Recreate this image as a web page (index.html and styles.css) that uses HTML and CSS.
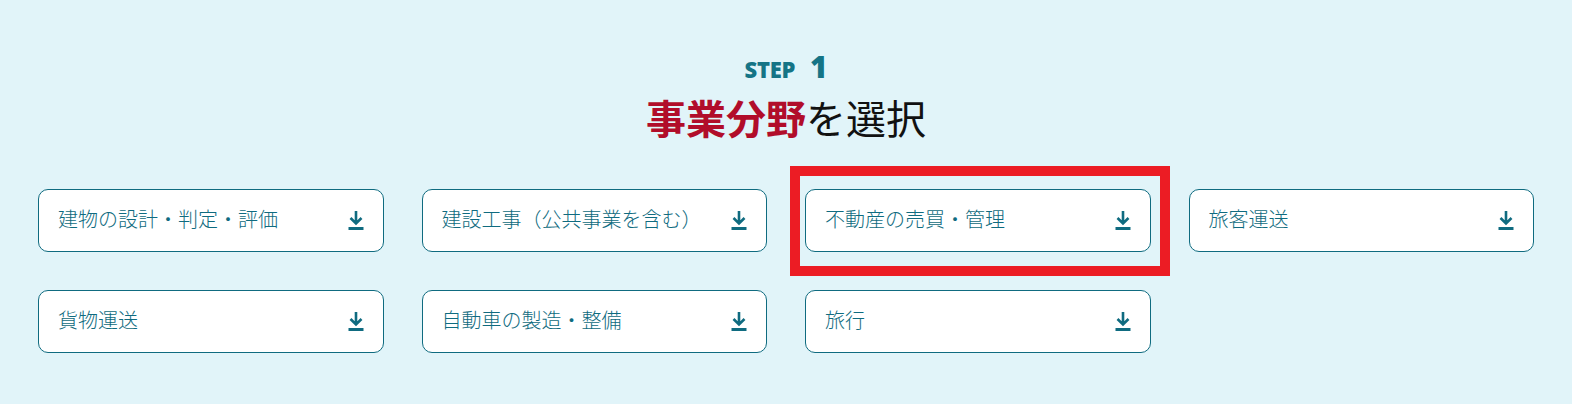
FILE: index.html
```html
<!DOCTYPE html>
<html lang="ja">
<head>
<meta charset="utf-8">
<link rel="stylesheet" href="styles.css">
</head>
<body>
<section class="step">
  <div class="step-head">
    <p class="step-label">STEP<span class="step-num">1</span></p>
    <h2 class="step-title"><strong>事業分野</strong>を選択</h2>
  </div>
  <ul class="cards">
    <li class="card"><span class="card-text">建物の設計・判定・評価</span><svg class="dl" viewBox="0 0 16 20"><path d="M8 1v12M2.5 8l5.5 5.5L13.5 8" /><path d="M0.5 18.5h15" class="bar"/></svg></li>
    <li class="card"><span class="card-text">建設工事（公共事業を含む）</span><svg class="dl" viewBox="0 0 16 20"><path d="M8 1v12M2.5 8l5.5 5.5L13.5 8" /><path d="M0.5 18.5h15" class="bar"/></svg></li>
    <li class="card card-marked"><span class="card-text">不動産の売買・管理</span><svg class="dl" viewBox="0 0 16 20"><path d="M8 1v12M2.5 8l5.5 5.5L13.5 8" /><path d="M0.5 18.5h15" class="bar"/></svg></li>
    <li class="card"><span class="card-text">旅客運送</span><svg class="dl" viewBox="0 0 16 20"><path d="M8 1v12M2.5 8l5.5 5.5L13.5 8" /><path d="M0.5 18.5h15" class="bar"/></svg></li>
    <li class="card"><span class="card-text">貨物運送</span><svg class="dl" viewBox="0 0 16 20"><path d="M8 1v12M2.5 8l5.5 5.5L13.5 8" /><path d="M0.5 18.5h15" class="bar"/></svg></li>
    <li class="card"><span class="card-text">自動車の製造・整備</span><svg class="dl" viewBox="0 0 16 20"><path d="M8 1v12M2.5 8l5.5 5.5L13.5 8" /><path d="M0.5 18.5h15" class="bar"/></svg></li>
    <li class="card"><span class="card-text">旅行</span><svg class="dl" viewBox="0 0 16 20"><path d="M8 1v12M2.5 8l5.5 5.5L13.5 8" /><path d="M0.5 18.5h15" class="bar"/></svg></li>
  </ul>
</section>
</body>
</html>
```

FILE: styles.css
```css
html, body {
  margin: 0;
  padding: 0;
  background: #e1f4f9;
}
body {
  font-family: "Noto Sans CJK JP", "Noto Sans", sans-serif;
  width: 1572px;
  height: 404px;
  overflow: hidden;
}
.step {
  padding: 52px 38px 0;
}
.step-head {
  text-align: center;
}
.step-label {
  margin: 0;
  font-family: "Open Sans", "Liberation Sans", sans-serif;
  font-weight: 800;
  font-size: 22px;
  line-height: 30px;
  color: #157486;
  letter-spacing: -0.3px;
}
.step-num {
  font-size: 30px;
  margin-left: 15px;
  font-weight: 800;
}
.step-title {
  margin: 9px 0 0;
  font-size: 40px;
  line-height: 48px;
  font-weight: 400;
  color: #111;
}
.step-title strong {
  color: #b10d2a;
  font-weight: 700;
}
.cards {
  list-style: none;
  margin: 48px 0 0;
  padding: 0;
  display: grid;
  grid-template-columns: repeat(4, 1fr);
  column-gap: 38px;
  row-gap: 38px;
}
.card {
  position: relative;
  box-sizing: border-box;
  height: 63px;
  background: #fff;
  border: 1px solid #0f6b80;
  border-radius: 10px;
  display: flex;
  align-items: center;
  justify-content: space-between;
  padding: 0 19px 0 19px;
  color: #0f6b80;
}
.card-text {
  font-size: 20px;
  font-weight: 300;
  line-height: 28px;
  margin-top: -3px;
}
.dl {
  width: 16px;
  height: 20px;
  fill: none;
  stroke: #0f6b80;
  stroke-width: 2.6;
  stroke-linecap: butt;
  margin-top: -2px;
}
.dl .bar {
  stroke-width: 3;
}
.card-marked::after {
  content: "";
  position: absolute;
  left: -16px;
  top: -24px;
  right: -20px;
  bottom: -25px;
  border: 10px solid #ec1c24;
  pointer-events: none;
}
```
